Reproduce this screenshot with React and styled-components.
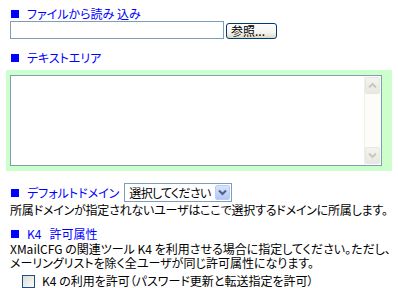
import styled, { createGlobalStyle } from "styled-components";

const GlobalStyle = createGlobalStyle`
  body {
    margin: 0;
    background: #fff;
    font-family: "Noto Sans CJK JP", "Noto Sans", sans-serif;
    font-size: 12px;
    font-feature-settings: "palt";
    color: #000;
  }
`;

const Page = styled.div`
  padding: 7px 0 0 10px;
  width: 388px;
  box-sizing: border-box;
`;

const Heading = styled.div`
  display: flex;
  align-items: center;
  height: 14px;
  line-height: 14px;
  margin-top: ${(p) => p.$top || 0}px;
  color: #0000ff;
  white-space: pre;
`;

const Square = styled.span`
  display: inline-block;
  width: 8px;
  height: 8px;
  background: #0000ff;
  margin: 0 8px 0 1px;
  flex: none;
`;

const FileRow = styled.div`
  display: flex;
  align-items: center;
  gap: 2px;
`;

const FileInput = styled.input`
  width: 214px;
  height: 18px;
  box-sizing: border-box;
  border: 1px solid #7f9db9;
  margin: 0;
  padding: 0 2px;
  font: inherit;
`;

const Button = styled.button`
  width: 51px;
  height: 16px;
  box-sizing: border-box;
  margin: 0;
  padding: 0 0 0 4px;
  border: 1px solid #003c74;
  border-radius: 3px;
  background: linear-gradient(#ffffff 0%, #f5f4ef 60%, #dcd8c8 100%);
  font: inherit;
  line-height: 12px;
  text-align: left;
  color: #000;
  position: relative;
  top: 1px;
`;

const GreenBox = styled.div`
  margin: 5px 0 0 -4px;
  width: 386px;
  box-sizing: border-box;
  padding: 5px 10px 5px 4px;
  background: #ccffcc;
`;

const AreaFrame = styled.div`
  display: flex;
  height: 89px;
  border: 1px solid #7f9db9;
  background: #fff;
`;

const Area = styled.textarea`
  flex: 1;
  border: 0;
  margin: 0;
  padding: 2px;
  resize: none;
  outline: none;
  font: inherit;
`;

const ScrollBar = styled.div`
  width: 17px;
  display: flex;
  flex-direction: column;
  justify-content: space-between;
  background: #fcfcf8;
  border-left: 1px solid #efefe8;
  padding: 1px 1px 1px 0;
  box-sizing: border-box;
`;

const ScrollButton = styled.div`
  height: 15px;
  display: flex;
  align-items: center;
  justify-content: center;
  border: 1px solid #e8e7df;
  border-radius: 2px;
  background: linear-gradient(#f4f4ef, #e9e8e0);
`;

const SelectRow = styled(Heading)`
  height: 19px;
`;

const SelectBox = styled.div`
  display: inline-flex;
  align-items: center;
  width: 108px;
  height: 19px;
  box-sizing: border-box;
  margin-left: 5px;
  border: 1px solid #7f9db9;
  background: #fff;
  padding: 1px;
`;

const Select = styled.select`
  appearance: none;
  flex: 1;
  min-width: 0;
  border: 0;
  margin: 0;
  padding: 0 0 0 3px;
  background: transparent;
  font: inherit;
  letter-spacing: -0.7px;
  color: #000;
  outline: none;
`;

const DropArrow = styled.span`
  width: 15px;
  height: 15px;
  display: flex;
  align-items: center;
  justify-content: center;
  border-radius: 2px;
  background: linear-gradient(#d6e3fc, #b2c8f6);
  border: 1px solid #bccdf5;
  box-sizing: border-box;
  flex: none;
`;

const Text = styled.p`
  margin: ${(p) => p.$top || 0}px 0 0;
  line-height: 14px;
  white-space: nowrap;
  letter-spacing: ${(p) => p.$ls || 0}px;
`;

const CheckRow = styled.label`
  display: flex;
  align-items: center;
  gap: 7px;
  margin: 4px 0 0 12px;
  height: 14px;
  line-height: 14px;
`;

const CheckBox = styled.span`
  width: 13px;
  height: 13px;
  box-sizing: border-box;
  border: 1px solid #1c5180;
  background: linear-gradient(135deg, #dcdcd7, #fbfbf9);
  flex: none;
`;

const Chevron = ({ up, color, size = 7 }) => (
  <svg width={size + 2} height={size} viewBox="0 0 9 7">
    <path
      d={up ? "M1 5.5 L4.5 2 L8 5.5" : "M1 1.5 L4.5 5 L8 1.5"}
      fill="none"
      stroke={color}
      strokeWidth="2"
    />
  </svg>
);

export default function App() {
  return (
    <>
      <GlobalStyle />
      <Page>
        <Heading>
          <Square />
          ファイルから読み 込み
        </Heading>
        <FileRow>
          <FileInput type="text" />
          <Button>参照...</Button>
        </FileRow>

        <Heading $top={12}>
          <Square />
          テキストエリア
        </Heading>
        <GreenBox>
          <AreaFrame>
            <Area />
            <ScrollBar>
              <ScrollButton>
                <Chevron up color="#c9c8c0" />
              </ScrollButton>
              <ScrollButton>
                <Chevron color="#c9c8c0" />
              </ScrollButton>
            </ScrollBar>
          </AreaFrame>
        </GreenBox>

        <SelectRow $top={12}>
          <Square />
          デフォルトドメイン
          <SelectBox>
            <Select defaultValue="">
              <option value="">選択してください</option>
            </Select>
            <DropArrow>
              <Chevron color="#4d6185" />
            </DropArrow>
          </SelectBox>
        </SelectRow>
        <Text $top={1} $ls={-0.2}>
          所属ドメインが指定されないユーザはここで選択するドメインに所属します。
        </Text>

        <Heading $top={10}>
          <Square />
          {"K4   許可属性"}
        </Heading>
        <Text $top={1}>
          XMailCFG の関連ツール K4 を利用させる場合に指定してください。ただし、
        </Text>
        <Text>メーリングリストを除く全ユーザが同じ許可属性になります。</Text>
        <CheckRow>
          <CheckBox />
          K4 の利用を許可（パスワード更新と転送指定を許可）
        </CheckRow>
      </Page>
    </>
  );
}
